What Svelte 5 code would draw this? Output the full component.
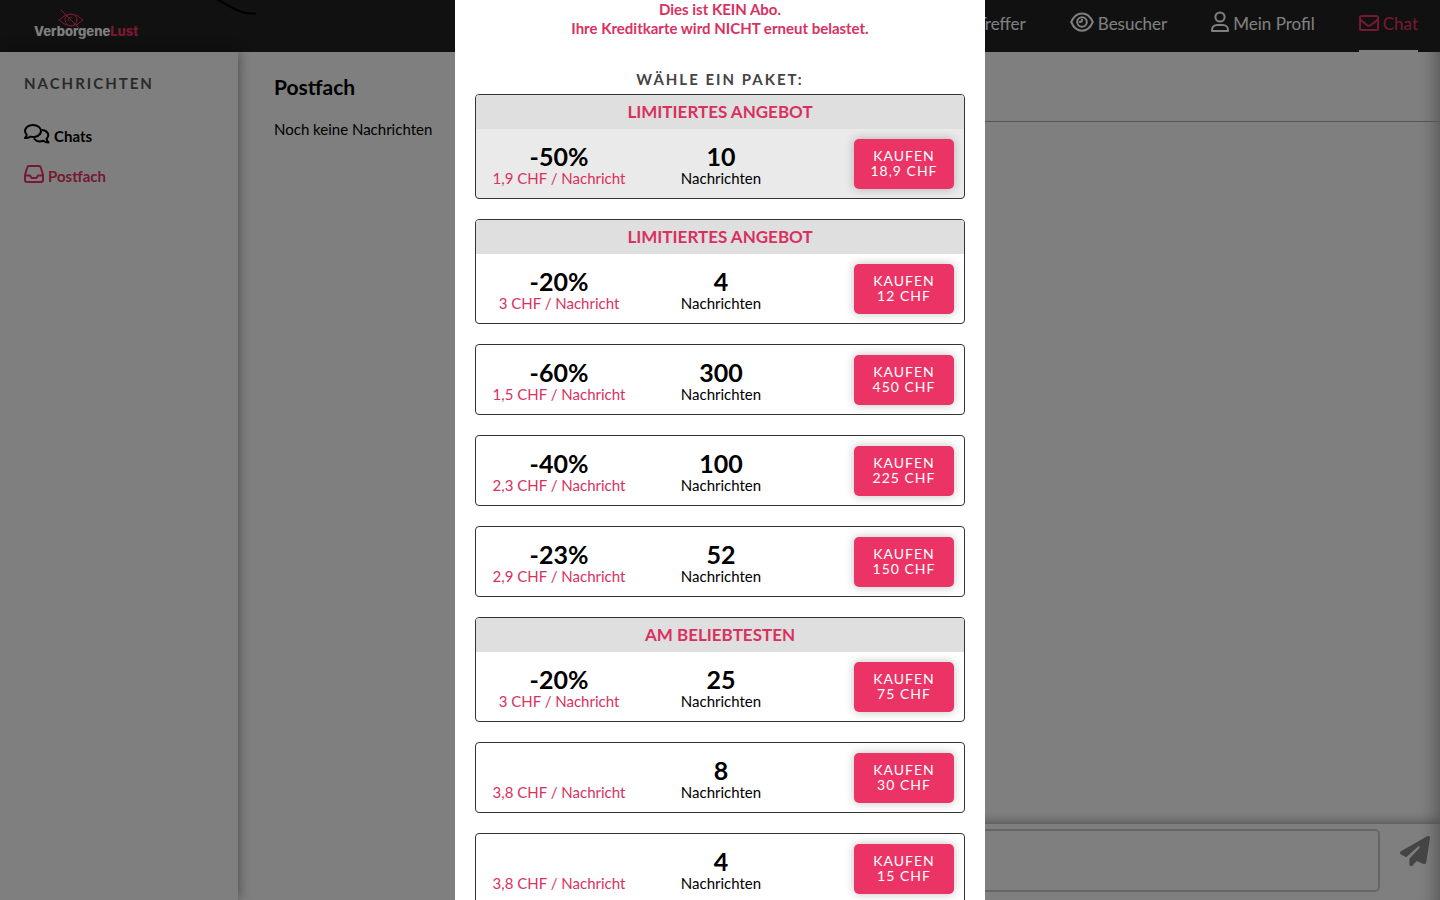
<script>
  let message = $state('');

  const navItems = [
    { label: 'Treffer', icon: 'heart' },
    { label: 'Besucher', icon: 'eye' },
    { label: 'Mein Profil', icon: 'user' },
    { label: 'Chat', icon: 'envelope', active: true }
  ];

  const packages = [
    { banner: 'LIMITIERTES ANGEBOT', discount: '-50%', rate: '1,9', count: 10, price: '18,9', selected: true },
    { banner: 'LIMITIERTES ANGEBOT', discount: '-20%', rate: '3', count: 4, price: '12' },
    { discount: '-60%', rate: '1,5', count: 300, price: '450' },
    { discount: '-40%', rate: '2,3', count: 100, price: '225' },
    { discount: '-23%', rate: '2,9', count: 52, price: '150' },
    { banner: 'AM BELIEBTESTEN', discount: '-20%', rate: '3', count: 25, price: '75' },
    { rate: '3,8', count: 8, price: '30' },
    { rate: '3,8', count: 4, price: '15' }
  ];
</script>

<div class="page">
  <header class="topbar">
    <a class="logo" href="#home">
      <svg class="logo-eye" viewBox="0 0 26 20" aria-hidden="true">
        <path d="M1 11 Q13 -1 25 11 Q13 23 1 11Z" />
        <circle cx="13" cy="11" r="6" />
        <path d="M11 12 A2 2 0 0 1 14 9" />
        <path d="M3 1 L21 19" />
      </svg>
      <span class="logo-text">Verborgene<b>Lust</b></span>
    </a>
    <svg class="swoosh" viewBox="0 0 44 15" aria-hidden="true">
      <path d="M0 -2 C10 2 18 9 28 12 Q34 14 41 13.500" />
    </svg>
    <nav>
      {#each navItems as item}
        <a href="#{item.icon}" class:active={item.active}>
          {#if item.icon === 'eye'}
            <svg class="icon-eye" viewBox="0 0 24 20" aria-hidden="true">
              <path d="M1.2 10 C6 -1.5 18 -1.5 22.8 10 C18 21.5 6 21.5 1.2 10Z" />
              <circle cx="12" cy="10" r="4.8" />
              <path d="M9.8 10 A2.2 2.2 0 0 0 12 7.8" />
            </svg>
          {:else if item.icon === 'user'}
            <svg class="icon-user" viewBox="0 0 18 22" aria-hidden="true">
              <circle cx="9" cy="6" r="4.6" />
              <path d="M1 20 V19 C1 15.8 3.5 14 6 14 H12 C14.5 14 17 15.8 17 19 V20Z" />
            </svg>
          {:else if item.icon === 'envelope'}
            <svg class="icon-mail" viewBox="0 0 20 18" aria-hidden="true">
              <rect x="1" y="1" width="18" height="14" rx="1.5" />
              <path d="M1 4.500 L8 10 Q10 11.500 12 10 L19 4.500" />
            </svg>
          {/if}
          <span>{item.label}</span>
        </a>
      {/each}
    </nav>
  </header>

  <div class="content">
    <aside>
      <h2>NACHRICHTEN</h2>
      <a href="#chats">
        <svg class="icon-chats" viewBox="0 0 26 20" aria-hidden="true">
          <path d="M1 14 Q2.500 12.500 2.800 10.800 C-1.500 6 3 1 9 1 C13.500 1 17 3.600 17 7 C17 11.500 11.500 14 6.500 12.600 Q4 14.200 1 14Z" />
          <path d="M18.500 6 C24 6.800 26 11.500 22.500 15 Q23 16.800 24.500 18.500 Q21.500 18.500 19.200 16.800 C15.500 18 12 17 10.500 15" />
        </svg>
        <span>Chats</span>
      </a>
      <a href="#inbox" class="active">
        <svg class="icon-inbox" viewBox="0 0 20 20" aria-hidden="true">
          <path d="M5 1 H15 Q16.500 1 16.800 2.500 L19 10 V15 Q19 17 17 17 H3 Q1 17 1 15 V10 L3.200 2.500 Q3.500 1 5 1Z" />
          <path d="M1.500 10.500 H6 L7.500 13 H12.500 L14 10.500 H18.500" />
        </svg>
        <span>Postfach</span>
      </a>
    </aside>

    <section class="inbox">
      <h1>Postfach</h1>
      <p>Noch keine Nachrichten</p>
    </section>

    <section class="conversation">
      <div class="conversation-head"></div>
      <div class="conversation-body"></div>
      <form class="composer">
        <textarea aria-label="Nachricht" bind:value={message}></textarea>
        <button type="button" aria-label="Senden">
          <svg viewBox="0 0 512 512" aria-hidden="true">
            <path d="M498.1 5.600c10.100 7 15.400 19.100 13.500 31.200l-64 416c-1.500 9.700-7.400 18.200-16 23s-18.900 5.400-28 1.600L284 427.700l-68.500 74.100c-8.900 9.700-22.900 12.900-35.200 8.100S160 493.200 160 480V396.400c0-4 1.500-7.800 4.200-10.700L331.800 202.800c5.800-6.300 5.600-16-.4-22s-15.700-6.400-22-.7L106 360.800 17.700 316.600C7.100 311.300 .3 300.700 0 288.900s5.900-22.800 16.100-28.700l448-256c10.700-6.100 23.900-5.500 34 1.400z" />
          </svg>
        </button>
      </form>
    </section>
  </div>
</div>

<div class="backdrop">
  <div class="modal" role="dialog" aria-modal="true" aria-label="Wähle ein Paket">
    <p class="notice">Dies ist KEIN Abo.<br />Ihre Kreditkarte wird NICHT erneut belastet.</p>
    <h3>WÄHLE EIN PAKET:</h3>
    <div class="packages">
      {#each packages as pack}
        <article class:selected={pack.selected}>
          {#if pack.banner}
            <div class="banner">{pack.banner}</div>
          {/if}
          <div class="offer">
            <div class="cell">
              <strong>{pack.discount}</strong>
              <span class="rate">{pack.rate} CHF / Nachricht</span>
            </div>
            <div class="cell">
              <strong>{pack.count}</strong>
              <span>Nachrichten</span>
            </div>
            <button type="button">KAUFEN<br />{pack.price} CHF</button>
          </div>
        </article>
      {/each}
    </div>
  </div>
</div>

<style>
  :global(body) {
    margin: 0;
    overflow: hidden;
    font-family: Lato, 'Liberation Sans', sans-serif;
    font-size: 15px;
    color: #000;
  }

  h1, h2, h3, p {
    margin: 0;
  }

  a {
    color: inherit;
    text-decoration: none;
  }

  svg {
    fill: none;
    stroke: currentColor;
    stroke-width: 2;
    stroke-linejoin: round;
    stroke-linecap: round;
  }

  button {
    font-family: inherit;
    cursor: pointer;
  }

  .page {
    display: flex;
    flex-direction: column;
    height: 100vh;
    background: #fff;
  }

  .topbar {
    display: flex;
    align-items: stretch;
    box-sizing: border-box;
    height: 52px;
    padding: 0 22px 0 34px;
    background: #222;
    color: #fff;
  }

  .logo {
    display: flex;
    flex-direction: column;
    width: 110px;
    padding-top: 9px;
  }

  .logo-eye {
    width: 26px;
    height: 20px;
    margin-left: 24px;
    color: #eb3465;
    stroke-width: 1;
  }

  .logo-text {
    margin-top: -7px;
    font-family: Inter, 'Liberation Sans', sans-serif;
    font-size: 13px;
    line-height: 18px;
    font-weight: 800;
  }

  .logo-text b {
    color: #eb3465;
    font-weight: 800;
  }

  .swoosh {
    width: 44px;
    height: 15px;
    margin-left: 70px;
    color: #000;
  }

  nav {
    display: flex;
    gap: 44px;
    margin-left: auto;
  }

  nav a {
    display: flex;
    align-items: center;
    gap: 4px;
    box-sizing: border-box;
    padding-bottom: 3px;
    border-bottom: 2px solid transparent;
    font-size: 17px;
    white-space: nowrap;
  }

  nav a.active {
    border-color: #fff;
  }

  .active {
    color: #eb3465;
  }

  .icon-eye {
    width: 24px;
    height: 20px;
    padding-bottom: 4px;
  }

  .icon-user {
    width: 18px;
    height: 22px;
    padding-bottom: 4px;
  }

  .icon-mail {
    width: 20px;
    height: 18px;
  }

  .content {
    display: flex;
    flex: 1;
    min-height: 0;
  }

  aside {
    z-index: 1;
    flex: 0 0 214px;
    padding: 20px 0 0 24px;
    box-shadow: 0 0 12px rgba(0, 0, 0, 0.45);
  }

  aside h2 {
    margin-bottom: 32px;
    color: #555;
    font-size: 15px;
    line-height: 22px;
    letter-spacing: 2px;
  }

  aside a {
    display: flex;
    align-items: center;
    gap: 4px;
    height: 20px;
    margin-bottom: 20px;
    font-weight: 700;
  }

  .icon-chats {
    width: 26px;
    height: 20px;
    padding-bottom: 4px;
  }

  .icon-inbox {
    width: 20px;
    height: 20px;
    padding-bottom: 2px;
  }

  .inbox {
    flex: 1;
    padding: 22px 0 0 36px;
  }

  .inbox h1 {
    margin-bottom: 18px;
    font-size: 21px;
    line-height: 26px;
  }

  .inbox p {
    line-height: 22px;
  }

  .conversation {
    display: flex;
    flex: 1;
    flex-direction: column;
    box-shadow: inset -20px 0 20px -18px rgba(0, 0, 0, 0.4);
  }

  .conversation-head {
    height: 69px;
    border-bottom: 1px solid #aaa;
  }

  .conversation-body {
    flex: 1;
  }

  .composer {
    display: flex;
    gap: 20px;
    padding: 5px 10px 8px;
    box-shadow: 0 -2px 10px rgba(0, 0, 0, 0.35);
  }

  .composer textarea {
    flex: 1;
    box-sizing: border-box;
    height: 63px;
    border: 2px solid #ccc;
    border-radius: 5px;
    background: transparent;
    resize: none;
  }

  .composer button {
    width: 30px;
    height: 46px;
    padding: 0;
    border: 0;
    background: none;
    color: #888;
  }

  .composer svg {
    width: 30px;
    height: 30px;
    fill: currentColor;
    stroke: none;
  }

  .backdrop {
    position: fixed;
    inset: 0;
    z-index: 10;
    display: flex;
    justify-content: center;
    background: rgba(0, 0, 0, 0.5);
  }

  .modal {
    box-sizing: border-box;
    width: 530px;
    max-width: 100%;
    padding: 0 20px;
    overflow: hidden;
    background: #fff;
    text-align: center;
  }

  .notice {
    margin-bottom: 30px;
    color: #d9315f;
    font-weight: 700;
    line-height: 19px;
  }

  h3 {
    margin-bottom: 4px;
    color: #444;
    font-size: 15px;
    line-height: 22px;
    letter-spacing: 2px;
  }

  .packages {
    display: flex;
    flex-direction: column;
    gap: 20px;
  }

  article {
    border: 1px solid #333;
    border-radius: 4px;
    overflow: hidden;
  }

  article.selected {
    background: #eaeaea;
  }

  .banner {
    background: #dfdfdf;
    color: #d9315f;
    font-size: 17px;
    font-weight: 700;
    line-height: 34px;
  }

  .offer {
    display: grid;
    grid-template-columns: 1fr 1fr 1fr;
    align-items: center;
    height: 69px;
    padding-left: 2px;
  }

  .cell {
    display: flex;
    flex-direction: column;
    padding-top: 2px;
    line-height: 18px;
  }

  .cell strong {
    height: 26px;
    font-size: 25px;
    line-height: 26px;
  }

  .rate {
    color: #d9315f;
  }

  .offer button {
    justify-self: end;
    width: 100px;
    height: 50px;
    margin-right: 10px;
    padding: 0 0 2px;
    border: 0;
    border-radius: 5px;
    background: #eb3465;
    box-shadow: 0 0 10px rgba(0, 0, 0, 0.25);
    color: #fff;
    font-size: 14px;
    line-height: 15px;
    letter-spacing: 1px;
  }
</style>
